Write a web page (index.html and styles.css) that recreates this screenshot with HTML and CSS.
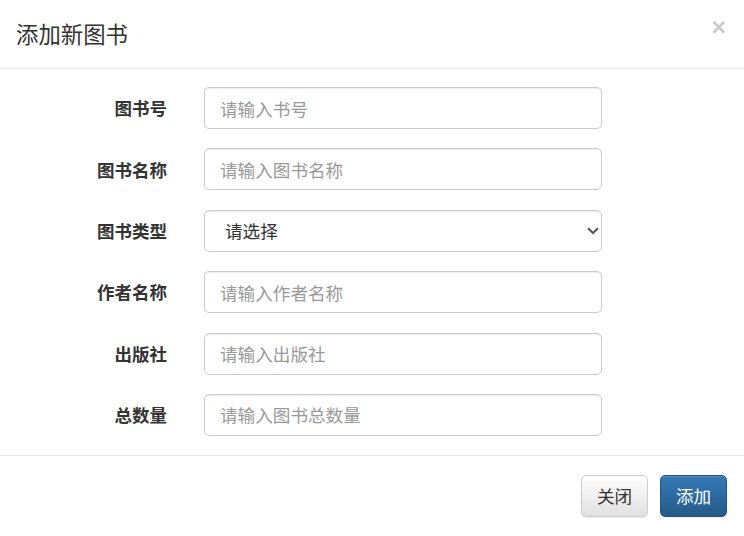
FILE: index.html
```html
<!DOCTYPE html>
<html lang="zh-CN">
<head>
<meta charset="utf-8">
<title>添加新图书</title>
<link rel="stylesheet" href="styles.css">
</head>
<body>
<div class="modal">
  <div class="modal-header">
    <h4 class="modal-title">添加新图书</h4>
    <button class="close" type="button">×</button>
  </div>
  <form class="modal-body">
    <div class="form-row">
      <label class="form-label">图书号</label>
      <input class="form-control" type="text" placeholder="请输入书号">
    </div>
    <div class="form-row">
      <label class="form-label">图书名称</label>
      <input class="form-control" type="text" placeholder="请输入图书名称">
    </div>
    <div class="form-row">
      <label class="form-label">图书类型</label>
      <div class="select-wrap">
        <select class="form-control form-select">
          <option>请选择</option>
        </select>
        <svg class="chevron" width="12" height="8" viewBox="0 0 12 8"><path d="M1 1.2 L6 6 L11 1.2" fill="none" stroke="#555" stroke-width="2"/></svg>
      </div>
    </div>
    <div class="form-row">
      <label class="form-label">作者名称</label>
      <input class="form-control" type="text" placeholder="请输入作者名称">
    </div>
    <div class="form-row">
      <label class="form-label">出版社</label>
      <input class="form-control" type="text" placeholder="请输入出版社">
    </div>
    <div class="form-row">
      <label class="form-label">总数量</label>
      <input class="form-control" type="text" placeholder="请输入图书总数量">
    </div>
  </form>
  <div class="modal-footer">
    <button class="btn btn-default" type="button">关闭</button>
    <button class="btn btn-primary" type="button">添加</button>
  </div>
</div>
</body>
</html>
```
FILE: styles.css
```css
* { box-sizing: border-box; }
html, body {
  margin: 0;
  padding: 0;
  background: #fff;
}
body {
  font-family: "Liberation Sans", "Noto Sans CJK SC", sans-serif;
  color: #333;
  width: 744px;
  height: 536px;
  overflow: hidden;
}
.modal {
  width: 744px;
  display: flex;
  flex-direction: column;
}
.modal-header {
  height: 69px;
  border-bottom: 1px solid #e5e5e5;
  display: flex;
  align-items: center;
  justify-content: space-between;
  padding: 0 18px 0 16px;
}
.modal-title {
  margin: 0;
  font-family: "Noto Sans CJK SC", sans-serif;
  font-weight: 400;
  font-size: 22.4px;
  line-height: 1;
  color: #333;
  position: relative;
  top: -1px;
}
.close {
  background: none;
  border: 0;
  padding: 0;
  margin: 0;
  font-family: "Liberation Sans", sans-serif;
  font-size: 25px;
  font-weight: 700;
  line-height: 1;
  color: #000;
  opacity: 0.2;
  position: relative;
  top: -7px;
}
.modal-body {
  margin: 0;
  padding: 18px 0 19px 0;
  border-bottom: 1px solid #e5e5e5;
  display: flex;
  flex-direction: column;
  gap: 19.4px;
}
.form-row {
  display: flex;
  align-items: center;
  gap: 37px;
}
.form-label {
  width: 167px;
  text-align: right;
  font-family: "Noto Sans CJK SC", sans-serif;
  font-weight: 700;
  font-size: 17.5px;
  line-height: 1;
  color: #333;
}
.form-control {
  width: 398px;
  height: 42px;
  border: 1px solid #ccc;
  border-radius: 5px;
  padding: 0 15px;
  font-family: "Noto Sans CJK SC", sans-serif;
  font-size: 17.6px;
  color: #555;
  background: #fff;
  box-shadow: inset 0 1px 1px rgba(0,0,0,.075);
  outline: none;
}
.form-control::placeholder {
  color: #999;
}
.select-wrap {
  position: relative;
  width: 398px;
  height: 42px;
}
.form-select {
  -webkit-appearance: none;
  appearance: none;
  padding: 0 30px 0 20px;
  color: #333;
}
.chevron {
  position: absolute;
  left: 383px;
  top: 17px;
  pointer-events: none;
}
.modal-footer {
  padding: 19px 17px 19px 17px;
  display: flex;
  justify-content: flex-end;
  gap: 12px;
}
.btn {
  height: 42px;
  width: 67px;
  padding: 0;
  border-radius: 5px;
  font-family: "Noto Sans CJK SC", sans-serif;
  font-size: 17.6px;
  line-height: 1;
  cursor: pointer;
}
.btn-default {
  color: #333;
  border: 1px solid #ccc;
  background: linear-gradient(to bottom, #fff 0%, #e0e0e0 100%);
  box-shadow: inset 0 1px 0 rgba(255,255,255,.15), 0 1px 1px rgba(0,0,0,.075);
}
.btn-primary {
  color: #fff;
  border: 1px solid #245580;
  background: linear-gradient(to bottom, #337ab7 0%, #265a88 100%);
  box-shadow: inset 0 1px 0 rgba(255,255,255,.15), 0 1px 1px rgba(0,0,0,.075);
}
```
